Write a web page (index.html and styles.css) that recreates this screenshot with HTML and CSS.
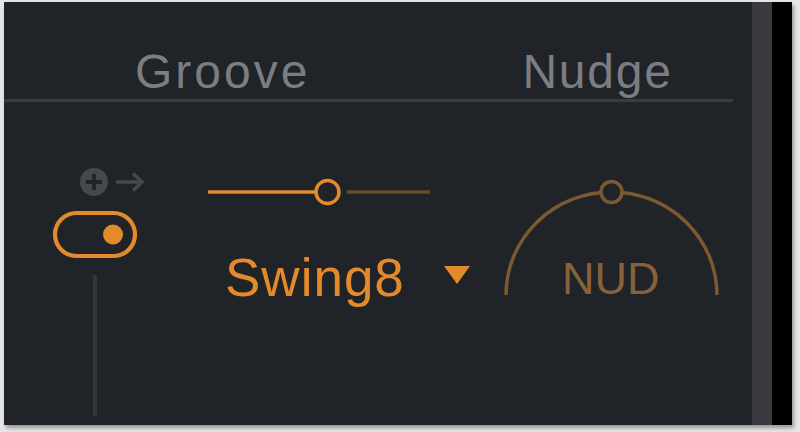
FILE: index.html
```html
<!DOCTYPE html>
<html>
<head>
<meta charset="utf-8">
<link rel="stylesheet" href="styles.css">
</head>
<body>
<div class="frame">
  <div class="main">
    <div class="header">
      <div class="label groove">Groove</div>
      <div class="label nudge">Nudge</div>
    </div>
    <div class="rule"></div>
    <div class="body">
      <div class="col1">
        <svg class="addicon" width="70" height="32" viewBox="0 0 70 32">
          <circle cx="16" cy="16" r="14" fill="#46484d"/>
          <path d="M16 8 V24 M8 16 H24" stroke="#202328" stroke-width="3.8"/>
          <path d="M38 16 H64 M55 7.5 L64 16 L55 24.5" stroke="#46484d" stroke-width="3.6" fill="none"/>
        </svg>
        <svg class="pill" width="90" height="52" viewBox="0 0 90 52">
          <rect x="4" y="5" width="80" height="43" rx="21.5" fill="none" stroke="#e38b2b" stroke-width="4.2"/>
          <circle cx="62" cy="26.5" r="10" fill="#e38b2b"/>
        </svg>
        <div class="vline"></div>
      </div>
      <div class="col2">
        <svg class="slider" width="232" height="30" viewBox="0 0 232 30">
          <path d="M4 15 H112" stroke="#e38b2b" stroke-width="3.5"/>
          <path d="M143 15 H226" stroke="#6b4a26" stroke-width="3.5"/>
          <circle cx="123.5" cy="15" r="11.5" fill="none" stroke="#e38b2b" stroke-width="3.5"/>
        </svg>
        <div class="swingrow">
          <span class="swing">Swing8</span>
          <svg class="tri" width="28" height="20" viewBox="0 0 28 20">
            <polygon points="1,1 27,1 14,19" fill="#e38b2b"/>
          </svg>
        </div>
      </div>
      <div class="col3">
        <div class="knob">
          <svg width="232" height="125" viewBox="0 0 232 125">
            <path d="M13 117 A105.5 103 0 0 1 224 117" fill="none" stroke="#7b5a32" stroke-width="3.5"/>
            <circle cx="118.5" cy="14" r="10.5" fill="#202328" stroke="#7b5a32" stroke-width="3.5"/>
          </svg>
          <span class="nud">NUD</span>
        </div>
      </div>
    </div>
  </div>
  <div class="scroll"></div>
  <div class="edge"></div>
</div>
</body>
</html>
```

FILE: styles.css
```css
html, body {
  margin: 0;
  padding: 0;
}
body {
  width: 800px;
  height: 432px;
  background: #e6e6e6;
  overflow: hidden;
}
.frame {
  margin: 2px 0 0 4px;
  width: 788px;
  height: 423px;
  display: flex;
  background: #202328;
  box-shadow: 2px 3px 4px rgba(0,0,0,0.35);
}
.main {
  width: 748px;
  display: flex;
  flex-direction: column;
}
.scroll {
  width: 20px;
  background: #3a3b40;
}
.edge {
  width: 20px;
  background: #000;
}
.header {
  height: 97px;
  display: flex;
  align-items: flex-end;
  font-family: "Liberation Sans", Arial, sans-serif;
  color: #7c7d82;
}
.label {
  font-size: 48px;
  line-height: 1;
  padding-bottom: 3px;
}
.groove {
  margin-left: 131px;
  letter-spacing: 3px;
}
.nudge {
  margin-left: 212px;
  letter-spacing: 1.8px;
}
.rule {
  height: 3px;
  margin-right: 19px;
  background: #3a3c41;
}
.body {
  display: flex;
  flex: 1;
}
.col1 {
  width: 182px;
  display: flex;
  flex-direction: column;
  align-items: flex-start;
}
.addicon {
  display: block;
  margin: 64px 0 0 74px;
}
.pill {
  display: block;
  margin: 10px 0 0 47px;
}
.vline {
  margin: 15px 0 0 89px;
  width: 4px;
  height: 141px;
  background: #35363b;
}
.col2 {
  width: 307px;
  display: flex;
  flex-direction: column;
  align-items: flex-start;
}
.slider {
  display: block;
  margin: 75px 0 0 18px;
}
.swingrow {
  display: flex;
  align-items: center;
  margin: 44px 0 0 39px;
}
.swing {
  font-family: "Liberation Sans", Arial, sans-serif;
  font-size: 53px;
  line-height: 1;
  letter-spacing: 1px;
  color: #e38b2b;
}
.tri {
  display: block;
  margin-left: 38px;
  margin-top: -6px;
}
.col3 {
  display: flex;
  flex-direction: column;
}
.knob {
  position: relative;
  margin: 76px 0 0 0;
  width: 232px;
  height: 125px;
}
.knob svg {
  display: block;
}
.nud {
  position: absolute;
  left: 69px;
  top: 78px;
  font-family: "Liberation Sans", Arial, sans-serif;
  font-size: 45px;
  line-height: 1;
  color: #86613a;
}
```
